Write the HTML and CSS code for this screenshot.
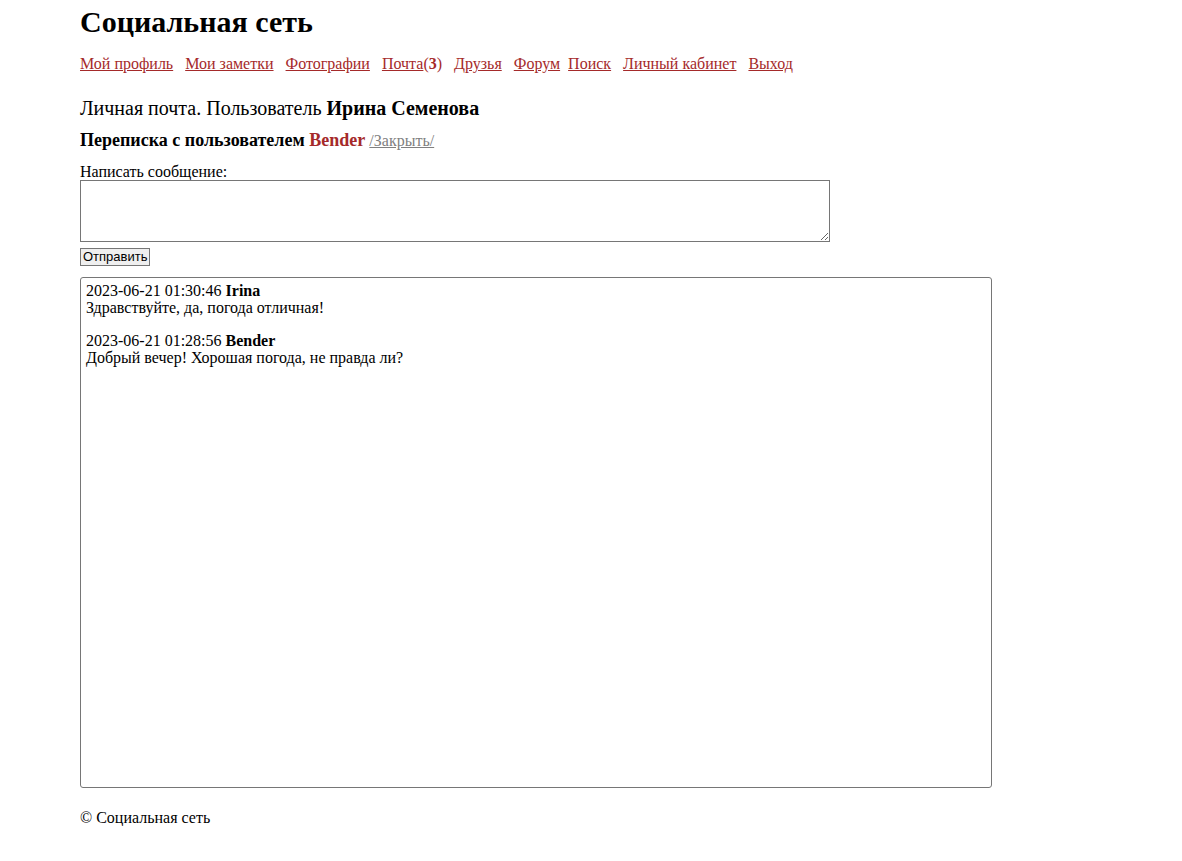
FILE: index.html
```html
<!DOCTYPE html>
<html lang="ru">
<head>
<meta charset="utf-8">
<title>Социальная сеть</title>
<link rel="stylesheet" href="styles.css">
</head>
<body>
<div class="page">
  <h1 class="title">Социальная сеть</h1>
  <nav class="nav">
    <a href="#">Мой профиль</a>
    <a href="#">Мои заметки</a>
    <a href="#">Фотографии</a>
    <span class="mail"><a href="#">Почта</a>(<b>3</b>)</span>
    <a href="#">Друзья</a>
    <a href="#" class="tight">Форум</a>
    <a href="#">Поиск</a>
    <a href="#">Личный кабинет</a>
    <a href="#">Выход</a>
  </nav>
  <h2 class="mail-title">Личная почта. Пользователь <b>Ирина Семенова</b></h2>
  <h3 class="conv">Переписка с пользователем <span class="user">Bender</span> <a href="#" class="close">/Закрыть/</a></h3>
  <form class="form">
    <label class="label">Написать сообщение:</label>
    <textarea class="text"></textarea>
    <button type="button" class="send">Отправить</button>
  </form>
  <div class="messages">
    <div class="msg">
      <div>2023-06-21 01:30:46 <b>Irina</b></div>
      <div>Здравствуйте, да, погода отличная!</div>
    </div>
    <div class="msg">
      <div>2023-06-21 01:28:56 <b>Bender</b></div>
      <div>Добрый вечер! Хорошая погода, не правда ли?</div>
    </div>
  </div>
  <footer class="footer">© Социальная сеть</footer>
</div>
</body>
</html>
```
FILE: styles.css
```css
html, body {
  margin: 0;
  padding: 0;
  background: #fff;
}
body {
  font-family: "Liberation Serif", "Times New Roman", serif;
  font-size: 16px;
  color: #000;
}
.page {
  padding: 0 80px;
}
.title {
  font-size: 30px;
  font-weight: bold;
  margin: 0;
  padding-top: 6px;
  line-height: 32px;
}
.nav {
  margin-top: 17px;
  display: flex;
  gap: 12px;
  line-height: 18px;
}
.nav a {
  color: #a52a2a;
}
.nav .tight {
  margin-right: -4px;
}
.mail {
  color: #a52a2a;
}
.mail-title {
  font-size: 20px;
  font-weight: normal;
  margin: 24px 0 0;
  line-height: 22px;
}
.conv {
  font-size: 18px;
  font-weight: bold;
  margin: 11px 0 0;
  line-height: 20px;
}
.user {
  color: #a52a2a;
}
.close {
  color: #808080;
  font-weight: normal;
  font-size: 16px;
}
.form {
  margin-top: 12px;
  display: flex;
  flex-direction: column;
  align-items: flex-start;
}
.label {
  line-height: 17px;
}
.text {
  width: 750px;
  height: 62px;
  box-sizing: border-box;
  border: 1px solid #767676;
  margin: 0;
  resize: both;
}
.send {
  margin-top: 6px;
  font-family: Arial, "Liberation Sans", sans-serif;
  font-size: 13px;
  padding: 1px 2px;
  border: 1px solid #767676;
  background: #efefef;
  line-height: 14px;
}
.messages {
  margin-top: 11px;
  width: 912px;
  height: 511px;
  box-sizing: border-box;
  border: 1px solid #767676;
  border-radius: 3px;
  padding: 4px 5px;
  line-height: 17px;
  overflow: auto;
}
.msg {
  margin-bottom: 16px;
}
.footer {
  margin-top: 21px;
  line-height: 17px;
}
```
